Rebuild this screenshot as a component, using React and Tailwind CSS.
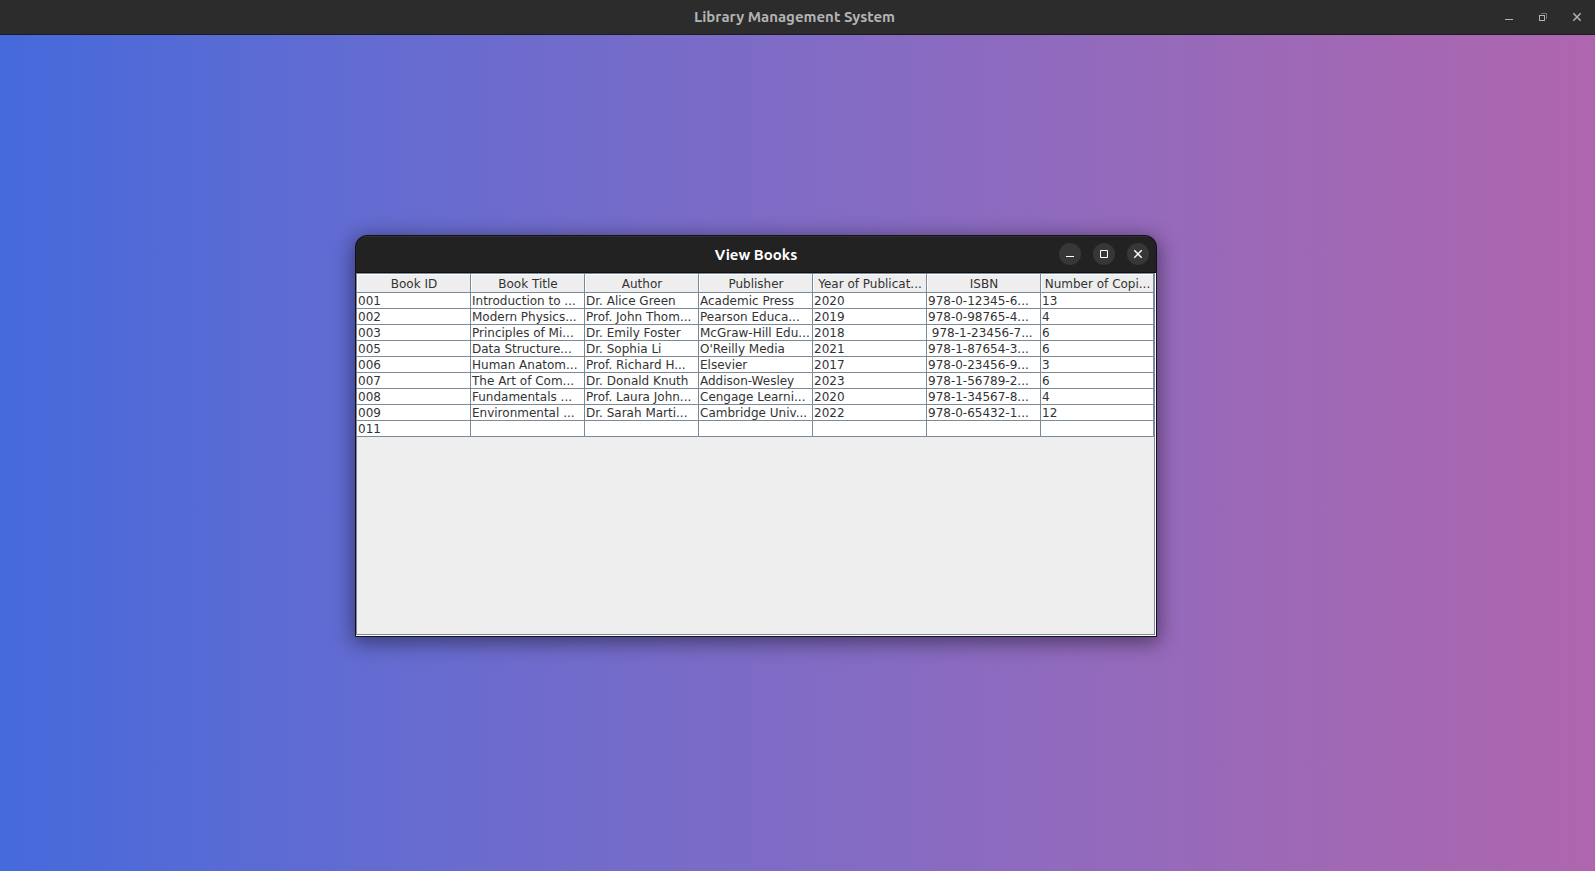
const columns = [
  'Book ID',
  'Book Title',
  'Author',
  'Publisher',
  'Year of Publicat...',
  'ISBN',
  'Number of Copi...',
];

const books = [
  ['001', 'Introduction to ...', 'Dr. Alice Green', 'Academic Press', '2020', '978-0-12345-6...', '13'],
  ['002', 'Modern Physics...', 'Prof. John Thom...', 'Pearson Educa...', '2019', '978-0-98765-4...', '4'],
  ['003', 'Principles of Mi...', 'Dr. Emily Foster', 'McGraw-Hill Edu...', '2018', ' 978-1-23456-7...', '6'],
  ['005', 'Data Structure...', 'Dr. Sophia Li', "O'Reilly Media", '2021', '978-1-87654-3...', '6'],
  ['006', 'Human Anatom...', 'Prof. Richard H...', 'Elsevier', '2017', '978-0-23456-9...', '3'],
  ['007', 'The Art of Com...', 'Dr. Donald Knuth', 'Addison-Wesley', '2023', '978-1-56789-2...', '6'],
  ['008', 'Fundamentals ...', 'Prof. Laura John...', 'Cengage Learni...', '2020', '978-1-34567-8...', '4'],
  ['009', 'Environmental ...', 'Dr. Sarah Marti...', 'Cambridge Univ...', '2022', '978-0-65432-1...', '12'],
  ['011', '', '', '', '', '', ''],
];

function DesktopBar() {
  return (
    <header className="grid h-[35px] shrink-0 grid-cols-[1fr_auto_1fr] items-center border-b border-[#1c1c1c] bg-[#2c2c2c] pr-1.5">
      <h1 className="col-start-2 font-['Ubuntu','Noto_Sans',sans-serif] text-[15px] leading-5 font-bold text-[#b3b3b3]">
        Library Management System
      </h1>
      <div className="flex justify-end gap-2.5 text-[#b3b3b3]">
        <button type="button" aria-label="Minimize" className="flex size-6 items-center justify-center">
          <svg viewBox="0 0 16 16" className="size-4" fill="currentColor" shapeRendering="crispEdges">
            <path d="M4 10h8v1H4z" />
          </svg>
        </button>
        <button type="button" aria-label="Restore" className="flex size-6 items-center justify-center">
          <svg viewBox="0 0 16 16" className="size-4" fill="none" stroke="currentColor" shapeRendering="crispEdges">
            <path d="M4.5 6.500h5v5h-5z" />
            <path d="M6 4.500h5.500V10" opacity="0.5" />
          </svg>
        </button>
        <button type="button" aria-label="Close" className="flex size-6 items-center justify-center">
          <svg viewBox="0 0 16 16" className="size-4" fill="none" stroke="currentColor" strokeWidth="1.5">
            <path d="M4.300 4.300l7.400 7.400M11.700 4.300l-7.400 7.400" />
          </svg>
        </button>
      </div>
    </header>
  );
}

function RoundButton({ label, children }) {
  return (
    <button type="button" aria-label={label} className="flex size-[22px] items-center justify-center rounded-full bg-[#373737] text-white">
      <svg viewBox="0 0 16 16" className="size-4" fill="none" stroke="currentColor">
        {children}
      </svg>
    </button>
  );
}

function BooksWindow() {
  return (
    <section
      aria-label="View Books"
      className="absolute top-[200px] left-[355px] flex h-[402px] w-[802px] flex-col overflow-hidden rounded-t-xl border border-[#14101c] bg-[#222222] shadow-[0_4px_20px_2px_rgba(0,0,0,0.45)]"
    >
      <div className="grid h-[37px] shrink-0 grid-cols-[1fr_auto_1fr] items-center border-t border-b border-t-[#303030] border-b-[#101010]">
        <h2 className="col-start-2 font-['Ubuntu','Noto_Sans',sans-serif] text-[15px] leading-5 font-bold text-white">View Books</h2>
        <div className="flex justify-end gap-3 pr-[7px] pb-0.5">
          <RoundButton label="Minimize">
            <path d="M4 10.500h8" />
          </RoundButton>
          <RoundButton label="Maximize">
            <path d="M4.500 4.500h7v7h-7z" />
          </RoundButton>
          <RoundButton label="Close">
            <path d="M4.300 4.300l7.400 7.400M11.700 4.300l-7.400 7.400" strokeWidth="1.400" />
          </RoundButton>
        </div>
      </div>
      <div className="flex-1 border-r border-b border-white bg-[#eeeeee]">
        <div className="h-full border border-[#7a8a99]">
          <table className="w-full table-fixed border-separate border-spacing-0 font-['DejaVu_Sans',sans-serif] text-xs text-[#333333]">
            <colgroup>
              <col span={6} className="w-[114px]" />
              <col />
            </colgroup>
            <thead>
              <tr>
                {columns.map((name) => (
                  <th key={name} scope="col" className="h-[19px] border-r border-b border-[#7a8a99] p-0 font-normal whitespace-nowrap">
                    <div className="h-[18px] border-t border-l border-white leading-[18px]">{name}</div>
                  </th>
                ))}
              </tr>
            </thead>
            <tbody>
              {books.map((book) => (
                <tr key={book[0]}>
                  {book.map((value, i) => (
                    <td key={columns[i]} className="h-4 border-r border-b border-[#7a8a99] bg-white p-0 pt-px pl-px leading-[14px] whitespace-pre">
                      {value}
                    </td>
                  ))}
                </tr>
              ))}
            </tbody>
          </table>
        </div>
      </div>
    </section>
  );
}

export default function App() {
  return (
    <div className="flex min-h-screen flex-col">
      <DesktopBar />
      <main className="relative flex-1 bg-linear-to-r from-[#456adb] to-[#af66ae]">
        <BooksWindow />
      </main>
    </div>
  );
}
